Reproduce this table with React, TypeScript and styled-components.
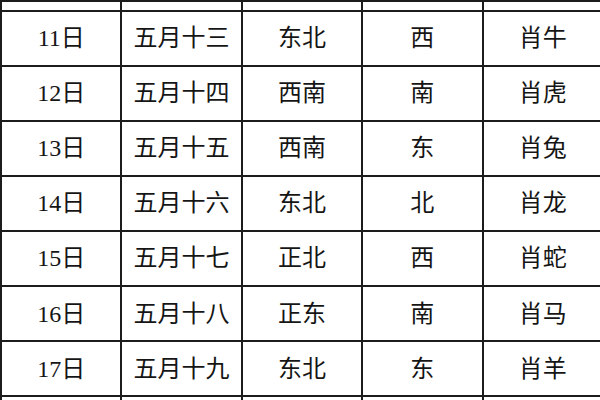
import styled, { createGlobalStyle } from 'styled-components';

const GlobalStyle = createGlobalStyle`
   html, body {
      margin: 0;
      padding: 0;
      background: #fff;
   }

   body {
      width: 600px;
      height: 400px;
      overflow: hidden;
   }
`;

const rows = [
   ['11日', '五月十三', '东北', '西', '肖牛'],
   ['12日', '五月十四', '西南', '南', '肖虎'],
   ['13日', '五月十五', '西南', '东', '肖兔'],
   ['14日', '五月十六', '东北', '北', '肖龙'],
   ['15日', '五月十七', '正北', '西', '肖蛇'],
   ['16日', '五月十八', '正东', '南', '肖马'],
   ['17日', '五月十九', '东北', '东', '肖羊'],
];

const App = () => {
   return (
      <>
         <GlobalStyle />
         <Sheet>
            <colgroup>
               {[...Array(5)].map((_, i) => (
                  <col key={i} />
               ))}
            </colgroup>
            <tbody>
               {/* the rows above and below are cut by the frame */}
               <CutRow>
                  {[...Array(5)].map((_, i) => (
                     <Cell key={i} />
                  ))}
               </CutRow>
               {rows.map(row => (
                  <Row key={row[0]}>
                     {row.map((text, i) => (
                        <Cell key={i}>{text}</Cell>
                     ))}
                  </Row>
               ))}
               <CutRow>
                  {[...Array(5)].map((_, i) => (
                     <Cell key={i} />
                  ))}
               </CutRow>
            </tbody>
         </Sheet>
      </>
   );
};

export default App;

const Sheet = styled.table`
   border-collapse: collapse;
   table-layout: fixed;
   width: 602px;

   col {
      width: 120.4px;
   }
`;

const Row = styled.tr`
   height: 55.1px;
`;

const CutRow = styled.tr`
   height: 9.5px;
`;

const Cell = styled.td`
   border: 2px solid #1c1c1c;
   padding: 0;
   text-align: center;
   vertical-align: middle;
   font-family: 'Liberation Serif', 'Noto Sans CJK SC', serif;
   font-size: 24px;
   line-height: 1;
   color: #151515;
   white-space: nowrap;
`;
